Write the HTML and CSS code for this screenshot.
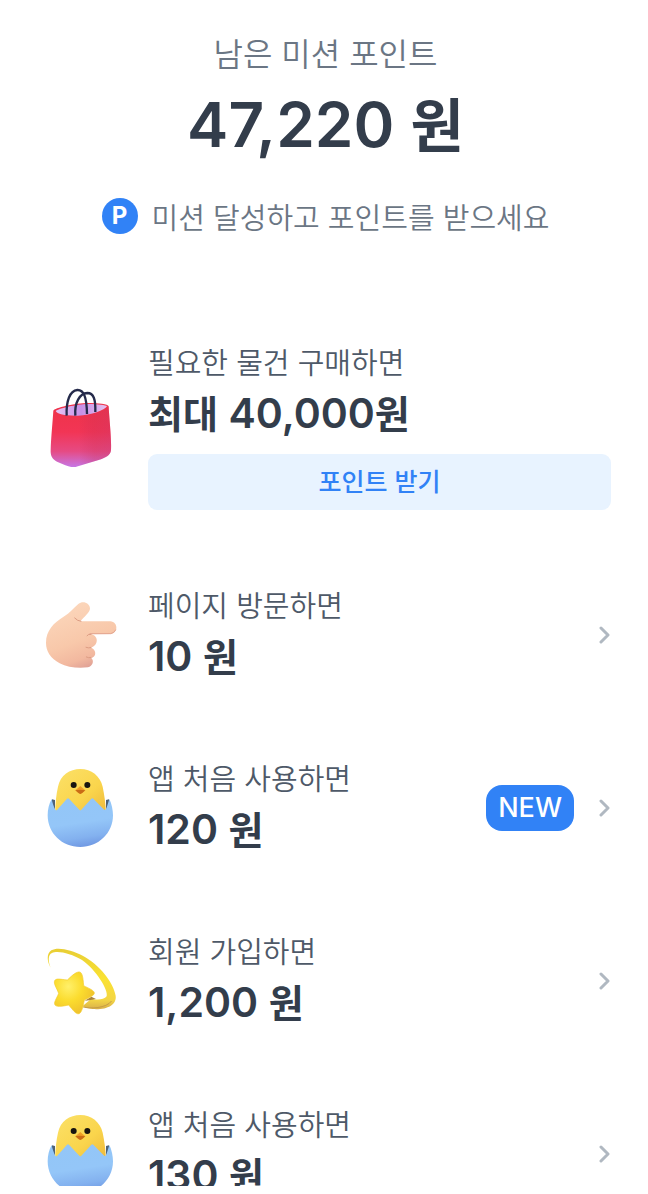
FILE: index.html
```
<!DOCTYPE html>
<html lang="ko">
<head>
    <meta charset="UTF-8">
    <meta name="viewport" content="width=device-width, initial-scale=1.0">
    <title>미션 포인트</title>
    <link rel="stylesheet" href="styles.css">
</head>
<body>
    <svg class="sprite" aria-hidden="true">
        <defs>
            <linearGradient id="yolk" x1="0" y1="0" x2="1" y2="1">
                <stop offset="0" stop-color="#fbe169"/>
                <stop offset="0.6" stop-color="#fad54c"/>
                <stop offset="1" stop-color="#eeb93c"/>
            </linearGradient>
            <linearGradient id="shell" x1="0.4" y1="0" x2="0.6" y2="1">
                <stop offset="0" stop-color="#93c6f7"/>
                <stop offset="0.5" stop-color="#94c6f8"/>
                <stop offset="0.8" stop-color="#83b1ef"/>
                <stop offset="1" stop-color="#6f97e2"/>
            </linearGradient>
        </defs>
        <symbol id="chick" viewBox="30 54 240 240">
            <path d="M66 148L75 150V178L64 174ZM237 148L228 150V178L238 174Z" fill="#4d6278"/>
            <path d="M75 190C76 160 79 132 84 110C91 76 119 57 151 57C184 57 211 78 218 110C223 134 227 162 228 190Z" fill="url(#yolk)"/>
            <ellipse cx="131" cy="105" rx="9" ry="9" fill="#171410"/>
            <ellipse cx="172" cy="105" rx="9" ry="9" fill="#171410"/>
            <path d="M151 108Q157 113 166 121Q158 129 151 132Q144 129 136 121Q145 113 151 108Z" fill="#ef9d25"/>
            <path d="M136 121Q151 117 166 121Q158 129 151 132Q144 129 136 121Z" fill="#c96c16"/>
            <path d="M65 147C67 157 71 170 76 179Q80 183 83 178L111 146Q114 143 117 146L148 179Q151 182 154 179L184 146Q187 143 190 146L221 178Q225 182 228 177C232 168 235 157 238 147C245 161 249 180 249 196C249 250 205 291 151 291C96 291 53 250 53 196C53 179 57 161 65 147Z" fill="url(#shell)"/>
        </symbol>
        <symbol id="chevron" viewBox="0 0 12 20">
            <path d="M2 3L9 10L2 17" fill="none" stroke="#b0b8c1" stroke-width="3" stroke-linecap="round" stroke-linejoin="round"/>
        </symbol>
    </svg>

    <main class="screen">
        <header class="summary">
            <p class="summary-title">남은 미션 포인트</p>
            <h1 class="summary-amount">47,220<span class="unit"> 원</span></h1>
            <p class="summary-hint">
                <span class="point-icon">P</span>
                미션 달성하고 포인트를 받으세요
            </p>
        </header>

        <ul class="missions">
            <li class="mission">
                <svg class="mission-icon" viewBox="30 51 240 240" aria-hidden="true">
                    <defs>
                        <linearGradient id="bagFront" x1="0" y1="0" x2="0" y2="1">
                            <stop offset="0" stop-color="#ee3348"/>
                            <stop offset="0.45" stop-color="#f23555"/>
                            <stop offset="0.75" stop-color="#e64a83"/>
                            <stop offset="1" stop-color="#c677e6"/>
                        </linearGradient>
                        <linearGradient id="bagSide" x1="0" y1="0" x2="1" y2="0">
                            <stop offset="0" stop-color="#b5285a" stop-opacity="0"/>
                            <stop offset="0.5" stop-color="#c62f55" stop-opacity="0.25"/>
                            <stop offset="1" stop-color="#c23468" stop-opacity="0.3"/>
                        </linearGradient>
                        <linearGradient id="bagInside" x1="0" y1="0" x2="1" y2="0">
                            <stop offset="0" stop-color="#e6c6f5"/>
                            <stop offset="0.5" stop-color="#c690e6"/>
                            <stop offset="1" stop-color="#e5c3f1"/>
                        </linearGradient>
                    </defs>
                    <path d="M70 122C73 114 135 99 174 99C205 99 234 102 236 109C237 140 245 205 243 240C242 256 226 264 206 270L139 290C130 293 118 291 106 286L81 275C67 268 61 258 62 240C63 204 68 155 70 122Z" fill="url(#bagFront)"/>
                    <path d="M145 138C190 135 232 121 236 109C237 140 245 205 243 240C242 256 226 264 206 270L151 286Z" fill="url(#bagSide)"/>
                    <path d="M77 123C86 115 140 103 174 102C205 102 227 105 231 109C224 121 184 135 144 137C108 138 81 132 77 123Z" fill="url(#bagInside)"/>
                    <path d="M110 137C108 94 119 62 142 60C161 59 170 80 171 132" fill="none" stroke="#252a4b" stroke-width="7"/>
                    <path d="M136 137C133 98 149 70 172 69C191 69 197 88 196 126" fill="none" stroke="#252a4b" stroke-width="7"/>
                </svg>
                <div class="mission-text">
                    <p class="mission-label">필요한 물건 구매하면</p>
                    <p class="mission-value"><span class="unit">최대 </span>40,000<span class="unit">원</span></p>
                    <button type="button" class="claim">포인트 받기</button>
                </div>
            </li>
            <li>
                <a class="mission" href="#">
                    <svg class="mission-icon" viewBox="30 33 240 240" aria-hidden="true">
                        <defs>
                            <linearGradient id="skin" x1="0.2" y1="0" x2="0.6" y2="1">
                                <stop offset="0" stop-color="#fcd8bd"/>
                                <stop offset="0.6" stop-color="#f8c8aa"/>
                                <stop offset="0.85" stop-color="#f2b89f"/>
                                <stop offset="1" stop-color="#dfa095"/>
                            </linearGradient>
                        </defs>
                        <path d="M145 60C159 48 180 58 180 74C179 86 162 98 151 112L241 112C265 114 265 148 242 150L183 151C199 153 205 169 197 181C193 187 187 190 182 191C196 194 200 211 191 218C188 221 185 221 183 221C194 229 188 247 174 250C145 254 112 250 89 238C62 223 48 202 48 177C48 140 70 117 104 96C119 87 130 73 145 60Z" fill="url(#skin)"/>
                        <path d="M134 102Q142 111 153 112M183 151Q175 149 171 155M183 191Q175 193 168 190M183 221Q175 222 169 219" fill="none" stroke="#dc9c83" stroke-width="3" stroke-linecap="round"/>
                        <path d="M180 149L242 149Q253 147 257 138" fill="none" stroke="#e3a590" stroke-width="3" stroke-linecap="round"/>
                    </svg>
                    <div class="mission-text">
                        <p class="mission-label">페이지 방문하면</p>
                        <p class="mission-value">10<span class="unit"> 원</span></p>
                    </div>
                    <svg class="chevron" aria-hidden="true"><use href="#chevron"/></svg>
                </a>
            </li>
            <li>
                <a class="mission" href="#">
                    <svg class="mission-icon" aria-hidden="true"><use href="#chick"/></svg>
                    <div class="mission-text">
                        <p class="mission-label">앱 처음 사용하면</p>
                        <p class="mission-value">120<span class="unit"> 원</span></p>
                    </div>
                    <span class="badge">NEW</span>
                    <svg class="chevron" aria-hidden="true"><use href="#chevron"/></svg>
                </a>
            </li>
            <li>
                <a class="mission" href="#">
                    <svg class="mission-icon" viewBox="30 39 240 240" aria-hidden="true">
                        <defs>
                            <radialGradient id="star" cx="0.35" cy="0.35" r="0.7">
                                <stop offset="0" stop-color="#fff06a"/>
                                <stop offset="0.5" stop-color="#fbdc2e"/>
                                <stop offset="1" stop-color="#efc02c"/>
                            </radialGradient>
                            <linearGradient id="trail" x1="0" y1="0" x2="0" y2="1">
                                <stop offset="0" stop-color="#e8ce35"/>
                                <stop offset="0.5" stop-color="#fae232"/>
                                <stop offset="0.85" stop-color="#f3d545"/>
                                <stop offset="1" stop-color="#d9b04a"/>
                            </linearGradient>
                        </defs>
                        <path d="M62 119C51 101 49 77 64 67C84 55 126 67 158 83C208 109 250 163 257 203C261 233 226 246 188 243C175 242 165 239 158 234L184 212C202 217 222 215 230 205C236 187 199 126 156 96C123 76 82 66 66 75C54 80 54 99 62 119Z" fill="url(#trail)"/>
                        <path d="M160 237C180 243 229 241 244 220" fill="none" stroke="#c69c46" stroke-width="3" stroke-linecap="round"/>
                        <path d="M164 218L184 206L198 213L178 217Z" fill="#a8843f"/>
                        <path d="M74 158C79 150 91 154 112 156C122 147 134 134 145 132C156 130 159 144 161 173C174 180 193 187 193 195C193 202 181 207 163 216C159 236 156 253 147 257C138 260 129 246 116 231C101 234 83 238 76 232C69 225 80 212 86 196C80 180 70 167 74 158Z" fill="url(#star)" stroke="#f3cb2e" stroke-width="2"/>
                    </svg>
                    <div class="mission-text">
                        <p class="mission-label">회원 가입하면</p>
                        <p class="mission-value">1,200<span class="unit"> 원</span></p>
                    </div>
                    <svg class="chevron" aria-hidden="true"><use href="#chevron"/></svg>
                </a>
            </li>
            <li>
                <a class="mission" href="#">
                    <svg class="mission-icon" aria-hidden="true"><use href="#chick"/></svg>
                    <div class="mission-text">
                        <p class="mission-label">앱 처음 사용하면</p>
                        <p class="mission-value">130<span class="unit"> 원</span></p>
                    </div>
                    <svg class="chevron" aria-hidden="true"><use href="#chevron"/></svg>
                </a>
            </li>
        </ul>
    </main>
</body>
</html>
```
FILE: styles.css
```
* {
    box-sizing: border-box;
}
body {
    font-family: "Noto Sans CJK KR", sans-serif;
    background: #fff;
    color: #333d4b;
    height: 100vh;
    margin: 0;
    padding-bottom: 8px;
}
p, h1, ul {
    margin: 0;
    padding: 0;
}
ul {
    list-style: none;
}
a {
    color: inherit;
    text-decoration: none;
}
.sprite {
    position: absolute;
    width: 0;
    height: 0;
}
.screen {
    height: 100%;
    overflow: hidden;
    padding: 28px 37px 0 40px;
}
.summary {
    display: flex;
    flex-direction: column;
    align-items: center;
}
.summary-title {
    font-size: 32px;
    line-height: 48px;
    font-weight: 350;
    color: #6b7684;
}
.summary-amount, .mission-value, .badge, .point-icon {
    font-family: Inter, "Noto Sans CJK KR", sans-serif;
}
.summary-amount {
    font-size: 62px;
    line-height: 98px;
    font-weight: 600;
}
.unit {
    font-family: "Noto Sans CJK KR", sans-serif;
    line-height: 1;
}
.summary-amount .unit {
    font-size: 58px;
}
.summary-hint {
    display: flex;
    align-items: center;
    gap: 14px;
    margin-top: 20px;
    font-size: 29px;
    line-height: 44px;
    font-weight: 350;
    color: #6b7684;
}
.point-icon {
    width: 36px;
    height: 36px;
    border-radius: 50%;
    background: #3182f6;
    color: #fff;
    font-size: 24px;
    line-height: 36px;
    font-weight: 700;
    text-align: center;
}
.missions {
    display: flex;
    flex-direction: column;
    gap: 69px;
    margin-top: 102px;
}
.mission {
    display: flex;
    align-items: center;
}
.mission-icon {
    flex: none;
    width: 80px;
    height: 80px;
    margin-right: 28px;
}
.mission-text {
    flex: 1;
}
.mission-label {
    font-size: 29px;
    line-height: 42px;
    font-weight: 350;
    color: #4e5968;
}
.mission-value {
    font-size: 41px;
    line-height: 62px;
    font-weight: 600;
}
.mission-value .unit {
    font-size: 38px;
}
.claim {
    display: block;
    width: 100%;
    height: 56px;
    margin: 10px 0 4px;
    padding: 0 0 4px;
    border: none;
    border-radius: 9px;
    background: #e8f3ff;
    color: #3182f6;
    font-family: inherit;
    font-size: 25px;
    font-weight: 500;
    cursor: pointer;
}
.badge {
    padding: 0 12px;
    border-radius: 16px;
    background: #3182f6;
    color: #fff;
    font-size: 27px;
    line-height: 46px;
    font-weight: 500;
}
.chevron {
    flex: none;
    width: 12px;
    height: 20px;
    margin-left: 25px;
}
```
